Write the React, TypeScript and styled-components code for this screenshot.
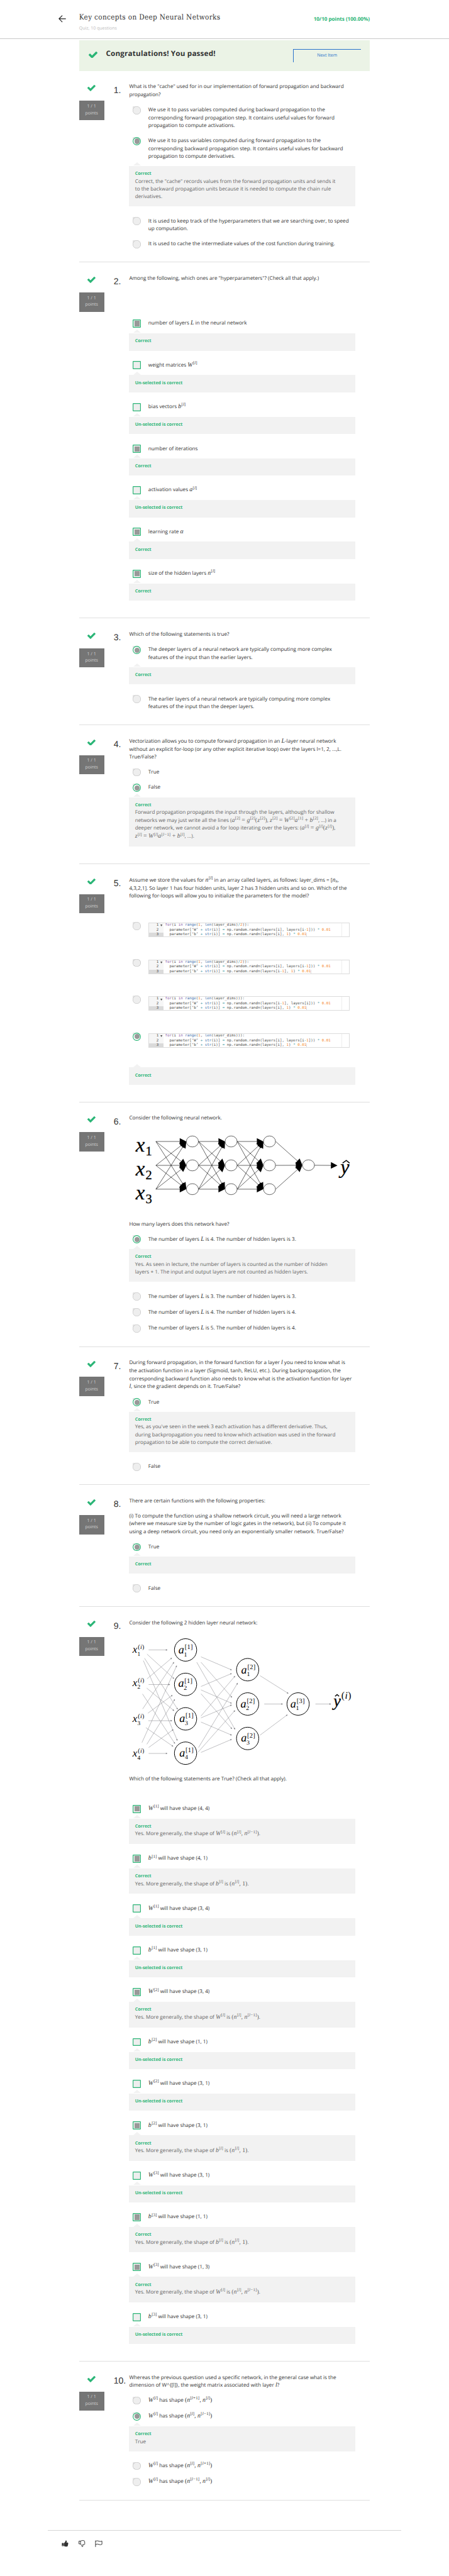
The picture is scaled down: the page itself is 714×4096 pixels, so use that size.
import React from "react";
import styled, { createGlobalStyle } from "styled-components";

const GREEN = "#2ab576";
const BLUE = "#2a73cc";

/* 1rem stands for ten design pixels of the 1221px wide layout. */
const GlobalStyle = createGlobalStyle`
  html { font-size: 5.849px; }
  body {
    margin: 0;
    background: #fff;
    color: #333;
    font-family: "Open Sans", sans-serif;
    font-size: 1.4rem;
    line-height: 2.1rem;
    text-rendering: geometricPrecision;
  }
  * { box-sizing: border-box; }
`;

const Page = styled.div`
  width: 714px;
  height: 4096px;
  overflow: hidden;
  display: flex;
  flex-direction: column;
  background: #fff;
`;

/* ---------- header ---------- */

const Header = styled.header`
  display: flex;
  align-items: flex-start;
  height: 10.6rem;
  padding: 0 21.55rem 0 15.9rem;
  border-bottom: 1px solid #c9c9c9;
  flex: none;
`;

const BackArrow = styled.svg`
  width: 2rem;
  height: 2rem;
  margin: 4.15rem 3.6rem 0 0;
  flex: none;
`;

const TitleBlock = styled.div`
  flex: 1;
  padding-top: 3.17rem;
  white-space: nowrap;
`;

const Title = styled.h1`
  margin: 0 0 0.86rem;
  font: 400 2rem/3rem "DejaVu Serif Condensed", "DejaVu Serif", serif;
  letter-spacing: 0.055rem;
`;

const Subtitle = styled.div`
  font-size: 1.2rem;
  line-height: 1.8rem;
  color: #bdbdbd;
`;

const Score = styled.div`
  padding-top: 4.2rem;
  font-weight: 700;
  letter-spacing: -0.01rem;
  color: ${GREEN};
  white-space: nowrap;
`;

/* ---------- banner ---------- */

const Content = styled.main`
  width: 79rem;
  margin-left: 21.5rem;
`;

const Banner = styled.section`
  display: flex;
  align-items: flex-start;
  height: 8.3rem;
  margin-top: 0.35rem;
  padding: 2.35rem 2.4rem 0 2.6rem;
  background: #ebf3e6;
`;

const CheckSvg = styled.svg<{ $size: number }>`
  display: block;
  flex: none;
  width: ${(p) => p.$size}rem;
  height: ${(p) => p.$size * 0.767}rem;
`;

const BannerCheck = styled.div`
  padding-top: 0.65rem;
  margin-right: 2.3rem;
`;

const BannerTitle = styled.h2`
  flex: 1;
  margin: 0;
  font-size: 2rem;
  line-height: 2.7rem;
  font-weight: 700;
  letter-spacing: 0.03rem;
`;

const NextButton = styled.a`
  width: 18.5rem;
  height: 3.55rem;
  border-top: 1px solid ${BLUE};
  border-left: 1px solid ${BLUE};
  color: ${BLUE};
  font-size: 1.2rem;
  line-height: 3.4rem;
  text-align: center;
`;

/* ---------- question ---------- */

const QuestionRow = styled.section`
  display: flex;
  align-items: flex-start;
  padding: calc(3.56rem - 1px) 0 3.73rem;
  border-bottom: 1px solid #dfdfdf;
`;

const Side = styled.div`
  width: 6.8rem;
  padding-top: 0.5rem;
  display: flex;
  flex-direction: column;
  align-items: center;
  flex: none;
`;

const Points = styled.div`
  width: 6.8rem;
  height: 5.2rem;
  margin-top: 2.6rem;
  padding: 0.8rem 0;
  background: #757575;
  color: #d2d2d2;
  font-size: 1.2rem;
  line-height: 1.8rem;
  text-align: center;
`;

const Num = styled.div`
  width: 4.22rem;
  margin-left: 2.6rem;
  padding-top: 0.54rem;
  font: 400 2.4rem/2.4rem "Liberation Sans", Arial, sans-serif;
  flex: none;
`;

const Body = styled.div`
  width: 61.4rem;
`;

const Line = styled.div<{ $h?: number }>`
  height: ${(p) => p.$h ?? 2.1}rem;
  line-height: ${(p) => p.$h ?? 2.1}rem;
  white-space: nowrap;
`;

const Options = styled.div<{ $top: number }>`
  display: flex;
  flex-direction: column;
  gap: 2.1rem;
  margin-top: ${(p) => p.$top}rem;
`;

const OptionRow = styled.div<{ $h?: number }>`
  display: flex;
  isolation: isolate;
  align-items: flex-start;
  gap: 2rem;
  padding-left: 1.01rem;
  height: ${(p) => (p.$h ? `${p.$h}rem` : "auto")};
`;

const Control = styled.span<{ $round: boolean; $on: boolean; $right: boolean }>`
  position: relative;
  flex: none;
  width: 2.2rem;
  height: 2.2rem;
  margin: -0.05rem 0;
  border-radius: ${(p) => (p.$round ? "50%" : "0.2rem")};
  background: ${(p) => (p.$on && p.$round ? "#fff" : "#eee")};
  box-shadow: inset 0 0 0 ${(p) => (p.$right ? `0.2rem ${GREEN}` : "0.1rem #bdbdbd")};
  display: flex;
  align-items: center;
  justify-content: center;

  &::before {
    content: "";
    display: ${(p) => (p.$round ? "block" : "none")};
    position: absolute;
    z-index: -1;
    left: 0;
    top: 0;
    width: 0.7rem;
    height: 0.7rem;
    background: #e4e4e4;
    border-radius: 0.2rem 0 0 0;
  }
`;

const Mark = styled.span<{ $round: boolean }>`
  width: 1.4rem;
  height: 1.4rem;
  background: #999;
  border-radius: ${(p) => (p.$round ? "50%" : "0")};
`;

const FeedbackBox = styled.div`
  position: relative;
  margin: 1.5rem 0 0.85rem;
  padding: 1.4rem 1.6rem 1.5rem;
  background: #f2f2f2;
  color: #666;

  &::before {
    content: "";
    position: absolute;
    left: 1.1rem;
    top: -0.95rem;
    border: 1.05rem solid transparent;
    border-top: none;
    border-bottom: 1rem solid #f2f2f2;
  }
`;

const Verdict = styled.div`
  height: 1.8rem;
  line-height: 1.8rem;
  font-size: 1.2rem;
  font-weight: 700;
  color: ${GREEN};
`;

/* ---------- formulas ---------- */

const Formula = styled.span`
  font-family: "Liberation Serif", "Times New Roman", serif;
  font-size: 1.69rem;
  line-height: 0;
`;

const Sup = styled.span`
  font-size: 0.7em;
  position: relative;
  top: -0.55em;
  line-height: 0;
  margin-left: 0.06em;
`;

const Sub = styled.span`
  font-size: 0.7em;
  position: relative;
  top: 0.25em;
  line-height: 0;
`;

const Op = styled.span`
  margin: 0 0.25em;
  ${Sup} & { margin: 0 0.05em; }
`;

function formula(src: string): React.ReactNode[] {
  const out: React.ReactNode[] = [];
  let i = 0;
  while (i < src.length) {
    const c = src[i];
    if ((c === "^" || c === "_") && src[i + 1] === "{") {
      const end = src.indexOf("}", i);
      const inner = formula(src.slice(i + 2, end));
      out.push(c === "^" ? <Sup key={i}>{inner}</Sup> : <Sub key={i}>{inner}</Sub>);
      i = end + 1;
    } else {
      if (/[a-zA-Zα]/.test(c)) out.push(<i key={i}>{c}</i>);
      else if (/[=+−]/.test(c)) out.push(<Op key={i}>{c}</Op>);
      else out.push(c);
      i += 1;
    }
  }
  return out;
}

/* Text between dollar signs is set as a formula. */
function Rich({ text }: { text: string }) {
  return (
    <>
      {text.split("$").map((part, i) =>
        i % 2 ? <Formula key={i}>{formula(part)}</Formula> : part
      )}
    </>
  );
}

function Lines({ lines }: { lines: string[] }) {
  return (
    <>
      {lines.map((l, i) => (
        <Line key={i} $h={l.includes("$") ? 2.21 : 2.1}>
          <Rich text={l} />
        </Line>
      ))}
    </>
  );
}

/* ---------- code sample ---------- */

const CodeBox = styled.div`
  display: flex;
  width: 54.8rem;
  height: 3.9rem;
  margin-top: 0.15rem;
  border: 1px solid #dcdcdc;
  overflow: hidden;
  font: 400 1rem/1.28rem "DejaVu Sans Mono", monospace;
  color: #4d4d4c;
  white-space: pre;
`;

const Gutter = styled.div`
  width: 3.95rem;
  background: #f6f6f6;
  flex: none;
`;

const GutterLine = styled.div<{ $active?: boolean }>`
  display: flex;
  justify-content: flex-end;
  height: 1.28rem;
  padding-right: ${(p) => (p.$active !== undefined ? "1.3rem" : "0.35rem")};
  background: ${(p) => (p.$active ? "#dadada" : "transparent")};
`;

const Fold = styled.svg`
  width: 0.55rem;
  height: 0.5rem;
  margin: 0.4rem 0 0 0.4rem;
`;

const CodeText = styled.div`
  width: 48.5rem;
  padding-left: 0.45rem;
  border-right: 1px solid #efefef;
  flex: none;
`;

const Tok = styled.span<{ $c: string }>`
  color: ${(p) => p.$c};
`;

const Caret = styled.span`
  border-right: 1px solid #ddd;
`;

function highlight(src: string) {
  return src.split(/(\bfor\b|\bin\b|\brange\b|\blen\b|\bstr\b|\b\d+\.\d+|\b\d+|[+=*/-])/).map((t, i) => {
    if (/^(for|in)$/.test(t)) return <Tok key={i} $c="#8959a8">{t}</Tok>;
    if (/^(range|len|str)$/.test(t)) return <Tok key={i} $c="#4271ae">{t}</Tok>;
    if (/^\d/.test(t)) return <Tok key={i} $c="#f5871f">{t}</Tok>;
    if (/^[+=*/-]$/.test(t)) return <Tok key={i} $c="#3e999f">{t}</Tok>;
    return t;
  });
}

function Code({ lines }: { lines: string[] }) {
  return (
    <CodeBox>
      <Gutter>
        <GutterLine>
          1
          <Fold viewBox="0 0 10 9"><path d="M0 0H10L5 9Z" fill="#555" /></Fold>
        </GutterLine>
        <GutterLine $active={false}>2</GutterLine>
        <GutterLine $active>3</GutterLine>
      </Gutter>
      <CodeText>
        {lines.map((l, i) => (
          <div key={i}>
            {highlight(l)}
            {i === 2 && <Caret />}
          </div>
        ))}
      </CodeText>
    </CodeBox>
  );
}

/* ---------- drawings ---------- */

const Drawing = styled.svg<{ $h: number }>`
  display: block;
  width: 61.9rem;
  height: ${(p) => p.$h}rem;
  font-family: "Liberation Serif", "Times New Roman", serif;
`;

type P = [number, number];

function BigArrow({ from, to }: { from: P; to: P }) {
  const dx = to[0] - from[0];
  const dy = to[1] - from[1];
  const d = Math.hypot(dx, dy);
  const ux = dx / d;
  const uy = dy / d;
  const bx = to[0] - ux * 17.8;
  const by = to[1] - uy * 17.8;
  return (
    <g>
      <line x1={from[0]} y1={from[1]} x2={bx} y2={by} stroke="#111" strokeWidth="1.1" />
      <polygon
        points={`${to[0]},${to[1]} ${bx - uy * 9},${by + ux * 9} ${bx + uy * 9},${by - ux * 9}`}
        fill="#000"
      />
    </g>
  );
}

function LayerNetwork() {
  const rows = [33.3, 98.3, 163];
  const cols = [173.6, 278.8, 383.2];
  const starts = [74.3, 190.5, 295.5];
  return (
    <Drawing $h={26.66} viewBox="1 -18 619 266.6">
      {cols.map((cx, c) =>
        rows.map((y0) =>
          rows.map((y1) => (
            <BigArrow key={`${c}-${y0}-${y1}`} from={[starts[c], y0]} to={[cx - 16.6, y1]} />
          ))
        )
      )}
      {rows.map((y) => (
        <BigArrow key={y} from={[400, y]} to={[472.5, 98]} />
      ))}
      <BigArrow from={[505, 98]} to={[568, 98.5]} />
      {cols.map((cx) =>
        rows.map((cy) => (
          <ellipse key={`${cx}-${cy}`} cx={cx} cy={cy} rx="16.4" ry="15" fill="#fff" stroke="#111" strokeWidth="1.1" />
        ))
      )}
      <ellipse cx="489.1" cy="97.8" rx="16.4" ry="14.6" fill="#fff" stroke="#111" strokeWidth="1.1" />
      {[1, 2, 3].map((n) => (
        <g key={n} stroke="#000" strokeWidth="0.5">
          <text x="19.5" y={61 + (n - 1) * 64.6} fontSize="56" fontStyle="italic">x</text>
          <text x="46.5" y={71.7 + (n - 1) * 64.6} fontSize="35">{n}</text>
        </g>
      ))}
      <text x="576" y="121" fontSize="55" fontStyle="italic" stroke="#000" strokeWidth="0.5">y</text>
      <path d="M582 92L592 85L601 92" fill="none" stroke="#000" strokeWidth="2.6" />
    </Drawing>
  );
}

const ARROWS: [number, number, number, number][] = [
  [54.6, 46.3, 106, 46.3], [50.2, 57.7, 124.2, 125], [43.5, 69, 134, 208.3], [40.3, 75.3, 132.9, 293.3],
  [50.2, 125, 118.2, 67.7], [54.6, 140.3, 113.1, 140.3], [49.4, 150, 124.2, 212], [38, 166, 126.5, 301.7],
  [38.4, 206.7, 123.8, 79], [52.6, 218.3, 119.8, 169], [53.8, 238.7, 119, 238.7], [47.1, 257.7, 121.8, 309],
  [36.4, 298.3, 131.3, 88.3], [49.8, 302.7, 126.1, 180], [54.6, 311.7, 122.2, 262.3], [54.6, 327.7, 106, 327.7],
  [196.9, 65, 281.1, 101], [196.9, 79.7, 281.5, 176], [185.4, 79.7, 289.8, 263],
  [196.9, 145.7, 281.1, 110], [196.9, 155, 281.1, 191.7], [196.9, 165.3, 281.5, 261.3],
  [196.9, 226, 289.8, 117], [196.9, 231, 281.1, 195.7], [196.9, 242.3, 281.1, 278.3],
  [190.2, 311.7, 297, 135.7], [189, 324.3, 289.8, 210.3], [196.9, 325, 281.1, 289],
  [357.5, 116.3, 435, 165], [368.9, 193.3, 419.9, 193.3], [357.5, 278, 432.6, 222], [508.1, 193.3, 550.8, 193.3],
];

/* cx, cy, left edge of the letter, its baseline, layer, unit */
const NODES: [number, number, number, number, number, number][] = [
  [155, 46.3, 135.6, 55.7, 1, 1],
  [155, 140, 135, 147, 1, 2],
  [155, 233.7, 138, 242, 1, 3],
  [155, 327, 138, 335.7, 1, 4],
  [323.8, 100, 306.4, 110, 2, 1],
  [323.8, 193.3, 304.5, 202, 2, 2],
  [323.8, 287, 305.6, 295.7, 2, 3],
  [461, 193.3, 440, 202, 3, 1],
];

function UnitNetwork() {
  return (
    <Drawing $h={40.37} viewBox="1 -16.1 619 403.7">
      {ARROWS.map(([x1, y1, x2, y2], i) => {
        const d = Math.hypot(x2 - x1, y2 - y1);
        const ux = (x2 - x1) / d;
        const uy = (y2 - y1) / d;
        return (
          <g key={i}>
            <line x1={x1} y1={y1} x2={x2 - ux * 3} y2={y2 - uy * 3} stroke="#85858a" strokeWidth="0.9" />
            <polygon
              points={`${x2},${y2} ${x2 - ux * 4.5 - uy * 2},${y2 - uy * 4.5 + ux * 2} ${x2 - ux * 4.5 + uy * 2},${y2 - uy * 4.5 - ux * 2}`}
              fill="#77777c"
            />
          </g>
        );
      })}
      {NODES.map(([cx, cy, tx, ty, layer, unit]) => (
        <g key={`${layer}${unit}`}>
          <ellipse cx={cx} cy={cy} rx="30.3" ry="30.6" fill="none" stroke="#000" strokeWidth="1.7" />
          <text x={tx} y={ty} fontSize="31" fontStyle="italic">a</text>
          <text x={tx + 17} y={ty - 11.5} fontSize="18" letterSpacing="0.4">[{layer}]</text>
          <text x={tx + 15} y={ty + 8} fontSize="17">{unit}</text>
        </g>
      ))}
      {[54.3, 144.3, 242.3, 336.3].map((y, i) => (
        <g key={y}>
          <text x="11" y={y} fontSize="29" fontStyle="italic">x</text>
          <text x="25.5" y={y - 10.5} fontSize="17" letterSpacing="0.4">
            (<tspan fontStyle="italic">i</tspan>)
          </text>
          <text x="24" y={y + 8} fontSize="16">{i + 1}</text>
        </g>
      ))}
      <text x="557" y="199" fontSize="45" fontStyle="italic" stroke="#000" strokeWidth="0.5">y</text>
      <path d="M561.5 172.5L567 167.5L572.5 172.5" fill="none" stroke="#000" strokeWidth="2.4" />
      <text x="578.5" y="179" fontSize="27" letterSpacing="0.8">
        (<tspan fontStyle="italic">i</tspan>)
      </text>
    </Drawing>
  );
}

function Check({ size }: { size: number }) {
  return (
    <CheckSvg $size={size} viewBox="121 334 1550 1188">
      <path
        fill={GREEN}
        d="M1671 566q0 40-28 68l-724 724-136 136q-28 28-68 28t-68-28l-136-136-362-362q-28-28-28-68t28-68l136-136q28-28 68-28t68 28l294 295 656-657q28-28 68-28t68 28l136 136q28 28 28 68z"
      />
    </CheckSvg>
  );
}

/* ---------- question parts ---------- */

type OptionData = {
  lines?: string[];
  code?: string[];
  on?: boolean;
  verdict?: string;
  note?: string[];
};

function Option({ o, round }: { o: OptionData; round: boolean }) {
  const right = Boolean(o.verdict);
  return (
    <div>
      <OptionRow $h={o.code ? 7.93 : undefined}>
        <Control $round={round} $on={Boolean(o.on)} $right={right}>
          {o.on && <Mark $round={round} />}
        </Control>
        {o.code ? <Code lines={o.code} /> : <div><Lines lines={o.lines ?? []} /></div>}
      </OptionRow>
      {o.verdict && (
        <FeedbackBox>
          <Verdict>{o.verdict}</Verdict>
          {o.note && <Lines lines={o.note} />}
        </FeedbackBox>
      )}
    </div>
  );
}

function Question(props: {
  n: number;
  children: React.ReactNode;
  options: OptionData[];
  gap?: number;
  boxes?: boolean;
}) {
  return (
    <QuestionRow>
      <Side>
        <Check size={2.2} />
        <Points>
          1 / 1<br />points
        </Points>
      </Side>
      <Num>{props.n}.</Num>
      <Body>
        {props.children}
        <Options $top={props.gap ?? 2.1}>
          {props.options.map((o, i) => (
            <Option key={i} o={o} round={!props.boxes} />
          ))}
        </Options>
      </Body>
    </QuestionRow>
  );
}

const yes = (text: string, note?: string): OptionData => ({
  lines: [text], on: true, verdict: "Correct", note: note ? [note] : undefined,
});
const no = (text: string): OptionData => ({ lines: [text], verdict: "Un-selected is correct" });

const W_NOTE = "Yes. More generally, the shape of $W^{[l]}$ is $(n^{[l]}, n^{[l−1]})$.";
const B_NOTE = "Yes. More generally, the shape of $b^{[l]}$ is $(n^{[l]}, 1)$.";

const W_ROW = "  parameter[‘W’ + str(i)] = np.random.randn(layers[i], layers[i-1])) * 0.01";

/* ---------- footer ---------- */

const Footer = styled.footer`
  width: 96rem;
  margin: 8rem 0 0 13rem;
  padding: 2.6rem 0 0 3.8rem;
  border-top: 1px solid #d6d6d6;
  display: flex;
  gap: 2.7rem;
`;

const FootIcon = styled.svg`
  width: 1.85rem;
  height: 1.85rem;
  overflow: visible;
`;

export default function App() {
  return (
    <Page>
      <GlobalStyle />
      <Header>
        <BackArrow viewBox="0 0 20 20">
          <path d="M10.5 1L1.5 10L10.5 19M1.5 10H20" fill="none" stroke="#222" strokeWidth="2" />
        </BackArrow>
        <TitleBlock>
          <Title>Key concepts on Deep Neural Networks</Title>
          <Subtitle>Quiz, 10 questions</Subtitle>
        </TitleBlock>
        <Score>10/10 points (100.00%)</Score>
      </Header>
      <Content>
        <Banner>
          <BannerCheck><Check size={2.4} /></BannerCheck>
          <BannerTitle>Congratulations! You passed!</BannerTitle>
          <NextButton>Next Item</NextButton>
        </Banner>

        <Question
          n={1}
          options={[
            { lines: ["We use it to pass variables computed during backward propagation to the", "corresponding forward propagation step. It contains useful values for forward", "propagation to compute activations."] },
            {
              lines: ["We use it to pass variables computed during forward propagation to the", "corresponding backward propagation step. It contains useful values for backward", "propagation to compute derivatives."],
              on: true,
              verdict: "Correct",
              note: ['Correct, the "cache" records values from the forward propagation units and sends it', "to the backward propagation units because it is needed to compute the chain rule", "derivatives."],
            },
            { lines: ["It is used to keep track of the hyperparameters that we are searching over, to speed", "up computation."] },
            { lines: ["It is used to cache the intermediate values of the cost function during training."] },
          ]}
        >
          <Lines lines={['What is the "cache" used for in our implementation of forward propagation and backward', "propagation?"]} />
        </Question>

        <Question
          n={2}
          boxes
          gap={10.05}
          options={[
            yes("number of layers $L$ in the neural network"),
            no("weight matrices $W^{[l]}$"),
            no("bias vectors $b^{[l]}$"),
            yes("number of iterations"),
            no("activation values $a^{[l]}$"),
            yes("learning rate $α$"),
            yes("size of the hidden layers $n^{[l]}$"),
          ]}
        >
          <Lines lines={['Among the following, which ones are "hyperparameters"? (Check all that apply.)']} />
        </Question>

        <Question
          n={3}
          options={[
            { lines: ["The deeper layers of a neural network are typically computing more complex", "features of the input than the earlier layers."], on: true, verdict: "Correct" },
            { lines: ["The earlier layers of a neural network are typically computing more complex", "features of the input than the deeper layers."] },
          ]}
        >
          <Lines lines={["Which of the following statements is true?"]} />
        </Question>

        <Question
          n={4}
          gap={2}
          options={[
            { lines: ["True"] },
            {
              lines: ["False"],
              on: true,
              verdict: "Correct",
              note: [
                "Forward propagation propagates the input through the layers, although for shallow",
                "networks we may just write all the lines ($a^{[2]}=g^{[2]}(z^{[2]})$, $z^{[2]}=W^{[2]}a^{[1]}+b^{[2]}$, ...) in a",
                "deeper network, we cannot avoid a for loop iterating over the layers: ($a^{[l]}=g^{[l]}(z^{[l]})$,",
                "$z^{[l]}=W^{[l]}a^{[l−1]}+b^{[l]}$, ...).",
              ],
            },
          ]}
        >
          <Lines lines={["Vectorization allows you to compute forward propagation in an $L$-layer neural network", "without an explicit for-loop (or any other explicit iterative loop) over the layers l=1, 2, ...,L.", "True/False?"]} />
        </Question>

        <Question
          n={5}
          gap={6}
          options={[
            { code: ["for(i in range(1, len(layer_dims)/2)):", W_ROW, "  parameter[‘b’ + str(i)] = np.random.randn(layers[i], 1) * 0.01"] },
            { code: ["for(i in range(1, len(layer_dims)/2)):", W_ROW, "  parameter[‘b’ + str(i)] = np.random.randn(layers[i-1], 1) * 0.01"] },
            { code: ["for(i in range(1, len(layer_dims))):", "  parameter[‘W’ + str(i)] = np.random.randn(layers[i-1], layers[i])) * 0.01", "  parameter[‘b’ + str(i)] = np.random.randn(layers[i], 1) * 0.01"] },
            { code: ["for(i in range(1, len(layer_dims))):", W_ROW, "  parameter[‘b’ + str(i)] = np.random.randn(layers[i], 1) * 0.01"], on: true, verdict: "Correct" },
          ]}
        >
          <Lines lines={["Assume we store the values for $n^{[l]}$ in an array called layers, as follows: layer_dims = [$n_{x}$,", "4,3,2,1]. So layer 1 has four hidden units, layer 2 has 3 hidden units and so on. Which of the", "following for-loops will allow you to initialize the parameters for the model?"]} />
        </Question>

        <Question
          n={6}
          gap={2}
          options={[
            { ...yes("The number of layers $L$ is 4. The number of hidden layers is 3."), note: ["Yes. As seen in lecture, the number of layers is counted as the number of hidden", "layers + 1. The input and output layers are not counted as hidden layers."] },
            { lines: ["The number of layers $L$ is 3. The number of hidden layers is 3."] },
            { lines: ["The number of layers $L$ is 4. The number of hidden layers is 4."] },
            { lines: ["The number of layers $L$ is 5. The number of hidden layers is 4."] },
          ]}
        >
          <Lines lines={["Consider the following neural network."]} />
          <LayerNetwork />
          <Lines lines={["How many layers does this network have?"]} />
        </Question>

        <Question
          n={7}
          gap={2}
          options={[
            {
              lines: ["True"],
              on: true,
              verdict: "Correct",
              note: ["Yes, as you've seen in the week 3 each activation has a different derivative. Thus,", "during backpropagation you need to know which activation was used in the forward", "propagation to be able to compute the correct derivative."],
            },
            { lines: ["False"] },
          ]}
        >
          <Lines lines={["During forward propagation, in the forward function for a layer $l$ you need to know what is", "the activation function in a layer (Sigmoid, tanh, ReLU, etc.). During backpropagation, the", "corresponding backward function also needs to know what is the activation function for layer", "$l$, since the gradient depends on it. True/False?"]} />
        </Question>

        <Question n={8} gap={2.04} options={[yes("True"), { lines: ["False"] }]}>
          <Lines lines={["There are certain functions with the following properties:"]} />
          <Line $h={2} />
          <Lines lines={["(i) To compute the function using a shallow network circuit, you will need a large network", "(where we measure size by the number of logic gates in the network), but (ii) To compute it", "using a deep network circuit, you need only an exponentially smaller network. True/False?"]} />
        </Question>

        <Question
          n={9}
          boxes
          gap={5.95}
          options={[
            yes("$W^{[1]}$ will have shape (4, 4)", W_NOTE),
            yes("$b^{[1]}$ will have shape (4, 1)", B_NOTE),
            no("$W^{[1]}$ will have shape (3, 4)"),
            no("$b^{[1]}$ will have shape (3, 1)"),
            yes("$W^{[2]}$ will have shape (3, 4)", W_NOTE),
            no("$b^{[2]}$ will have shape (1, 1)"),
            no("$W^{[2]}$ will have shape (3, 1)"),
            yes("$b^{[2]}$ will have shape (3, 1)", B_NOTE),
            no("$W^{[3]}$ will have shape (3, 1)"),
            yes("$b^{[3]}$ will have shape (1, 1)", B_NOTE),
            yes("$W^{[3]}$ will have shape (1, 3)", W_NOTE),
            no("$b^{[3]}$ will have shape (3, 1)"),
          ]}
        >
          <Lines lines={["Consider the following 2 hidden layer neural network:"]} />
          <UnitNetwork />
          <Lines lines={["Which of the following statements are True? (Check all that apply)."]} />
        </Question>

        <Question
          n={10}
          gap={1.87}
          options={[
            { lines: ["$W^{[l]}$ has shape $(n^{[l+1]}, n^{[l]})$"] },
            yes("$W^{[l]}$ has shape $(n^{[l]}, n^{[l−1]})$", "True"),
            { lines: ["$W^{[l]}$ has shape $(n^{[l]}, n^{[l+1]})$"] },
            { lines: ["$W^{[l]}$ has shape $(n^{[l−1]}, n^{[l]})$"] },
          ]}
        >
          <Lines lines={["Whereas the previous question used a specific network, in the general case what is the", "dimension of W^{[l]}, the weight matrix associated with layer $l$?"]} />
        </Question>
      </Content>

      <Footer>
        <FootIcon viewBox="0 128 1700 1536">
          <path
            fill="#333"
            d="M320 1344q0-26-19-45t-45-19q-27 0-45.5 19t-18.5 45q0 27 18.5 45.5t45.5 18.5q26 0 45-18.5t19-45.5zm160-512v640q0 26-19 45t-45 19h-288q-26 0-45-19t-19-45v-640q0-26 19-45t45-19h288q26 0 45 19t19 45zm1184 0q0 86-55 149 15 44 15 76 3 76-43 137 17 56 0 117-15 57-54 94 9 112-49 181-64 76-197 78h-129q-66 0-144-15.5t-121.5-29-120.5-39.5q-123-43-158-44-26-1-45-19.5t-19-44.5v-641q0-25 18-43.5t43-20.5q24-2 76-59t101-121q68-87 101-120 18-18 31-48t17.5-48.5 13.5-60.5q7-39 12.5-61t19.5-52 34-50q19-19 45-19 46 0 82.5 10.5t60 26 40 40.5 24 45 12 50 5 45 .5 39q0 38-9.5 76t-19 60-27.5 56q-3 6-10 18t-11 22-8 24h277q78 0 135 57t57 135z"
          />
        </FootIcon>
        <FootIcon viewBox="0 0 18 18">
          <path
            d="M1 2.5V10H5L8 13.5L9 17Q12 18 11.5 14L11 11.5H15.5Q17 11 16.3 9L16 4Q16 1 12 1H9L5 2.5ZM5 2.5V10"
            fill="none" stroke="#333" strokeWidth="1.6"
          />
        </FootIcon>
        <FootIcon viewBox="0 0 18 18">
          <path d="M1.5 1V18M1.5 3Q6 0.5 10 2.6T18.5 2.4V11Q14 13.4 10 11.2T1.5 11.8" fill="none" stroke="#333" strokeWidth="1.6" />
        </FootIcon>
      </Footer>
    </Page>
  );
}
